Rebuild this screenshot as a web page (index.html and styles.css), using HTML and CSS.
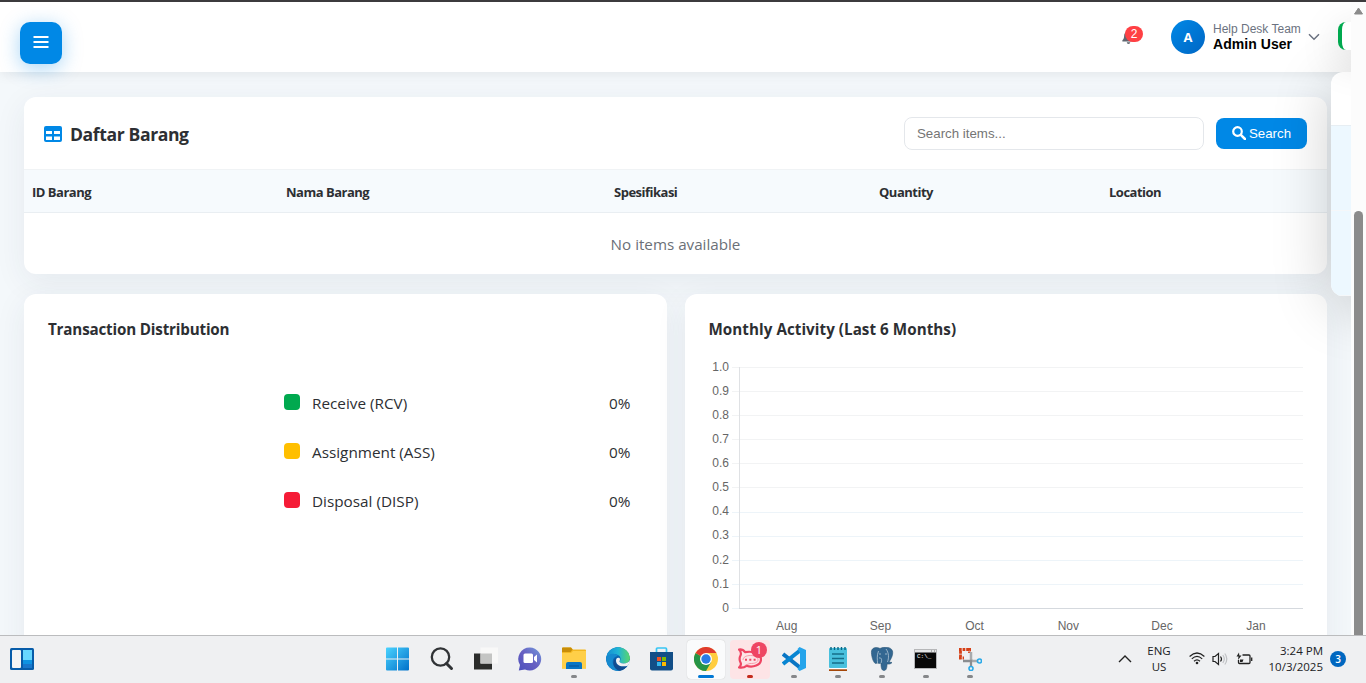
FILE: index.html
```html
<!DOCTYPE html>
<html lang="id">
<head>
<meta charset="utf-8">
<title>Daftar Barang</title>
<link rel="stylesheet" href="styles.css">
</head>
<body>
<div class="screen">
  <div class="window">
    <div class="page">
      <header class="topbar">
        <button class="menu-btn" aria-label="Menu">
          <svg width="16" height="14" viewBox="0 0 16 14"><path d="M0.5 2h15M0.5 7h15M0.5 12h15" stroke="#fff" stroke-width="2"/></svg>
        </button>
        <div class="account">
          <div class="bell">
            <svg width="13" height="14" viewBox="0 0 14 16" fill="#5f6670"><path d="M6 0h2v1.600c2.600.5 4 2.300 4 4.900 0 2.600.7 3.900 2 5.100V13H0v-1.400c1.300-1.200 2-2.500 2-5.100 0-2.600 1.400-4.400 4-4.900zM5 14h4a2 2 0 0 1-4 0z"/></svg>
            <span class="badge">2</span>
          </div>
          <div class="avatar">A</div>
          <div class="who"><span class="team">Help Desk Team</span><span class="name">Admin User</span></div>
          <svg class="chev" width="12" height="8" viewBox="0 0 12 8"><path d="M1 1.300l5 5 5-5" fill="none" stroke="#6b7280" stroke-width="1.500"/></svg>
        </div>
      </header>
      <main class="content">
        <section class="card items">
          <div class="items-head">
            <svg class="table-icon" width="18" height="16" viewBox="0 0 18 16"><rect width="18" height="16" rx="2" fill="#0088e6"/><path d="M2 5h6v3H2zM10 5h6v3h-6zM2 10.500h6V14H2zM10 10.500h6V14h-6z" fill="#fff"/></svg>
            <h2>Daftar Barang</h2>
            <input class="search" placeholder="Search items...">
            <button class="search-btn"><svg width="14" height="14" viewBox="0 0 14 14" fill="none" stroke="#fff"><circle cx="5.500" cy="5.500" r="4.300" stroke-width="2.200"/><path d="M8.800 8.800l4.200 4.200" stroke-width="2.500" stroke-linecap="round"/></svg>Search</button>
          </div>
          <div class="cols"><span>ID Barang</span><span>Nama Barang</span><span>Spesifikasi</span><span>Quantity</span><span>Location</span></div>
          <div class="empty">No items available</div>
        </section>
        <div class="charts">
          <section class="card panel">
            <h3>Transaction Distribution</h3>
            <div class="legend">
              <div class="entry"><i class="dot green"></i><span>Receive (RCV)</span><b>0%</b></div>
              <div class="entry"><i class="dot amber"></i><span>Assignment (ASS)</span><b>0%</b></div>
              <div class="entry"><i class="dot red"></i><span>Disposal (DISP)</span><b>0%</b></div>
            </div>
          </section>
          <section class="card panel">
            <h3 class="monthly">Monthly Activity (Last 6 Months)</h3>
            <svg class="chart" width="594" height="280" viewBox="709 359 594 280">
              <path class="grid" d="M732 367.500h571M732 391.500h571M732 415.500h571M732 439.500h571M732 463.500h571M732 487.500h571"/>
              <path class="grid cool" d="M732 512.500h571M732 536.500h571M732 560.500h571M732 584.500h571M732 608.500h7"/>
              <path d="M739.500 367v242" stroke="#dfe1e4"/><path d="M739 608.500h564" stroke="#d5d9de"/>
              <g text-anchor="end"><text x="729" y="371">1.0</text><text x="729" y="395">0.9</text><text x="729" y="419">0.8</text><text x="729" y="443">0.7</text><text x="729" y="467">0.6</text><text x="729" y="491">0.5</text><text x="729" y="515">0.4</text><text x="729" y="539">0.3</text><text x="729" y="564">0.2</text><text x="729" y="588">0.1</text><text x="729" y="612">0</text></g>
              <g text-anchor="middle"><text x="786.700" y="630">Aug</text><text x="880.500" y="630">Sep</text><text x="974.500" y="630">Oct</text><text x="1068.300" y="630">Nov</text><text x="1162" y="630">Dec</text><text x="1256" y="630">Jan</text></g>
            </svg>
          </section>
        </div>
      </main>
      <div class="toast"></div>
      <div class="notices"><div class="notice-head"></div><div class="notice"></div><div class="notice"></div></div>
    </div>
    <div class="scrollbar"><svg width="9" height="8" viewBox="0 0 9 8"><path d="M4.500 1L8.500 7h-8z" fill="#8b8b8b" stroke="#8b8b8b" stroke-linejoin="round"/></svg><div class="thumb"></div></div>
  </div>
  <footer class="taskbar">
    <div class="widgets"><svg width="24" height="22" viewBox="0 0 24 22"><rect width="24" height="22" rx="1.500" fill="#075ca9"/><rect x="2" y="2" width="9" height="18" rx="1" fill="#f4f4f4"/><path d="M13 2h9v10h-9z" fill="#68d7ff"/><path d="M13 12h9v4h-9z" fill="#0e93e2"/><path d="M13 16h9v4h-9z" fill="#1877cc"/></svg></div>
    <div class="apps">
      <div class="app"><svg viewBox="0 0 24 24"><defs><linearGradient id="win" x2="1" y2="1"><stop stop-color="#4ad3ff"/><stop offset="1" stop-color="#0070c9"/></linearGradient></defs><path d="M0 1.500Q0 .5 1 .5h10v11H0zM12 .5h10q1 0 1 1v10H12zM0 12.500h11v11H1q-1 0-1-1zM12 12.500h11v10q0 1-1 1H12z" fill="url(#win)"/></svg></div>
      <div class="app"><svg viewBox="0 0 24 24" fill="none" stroke="#303336"><circle cx="10.500" cy="10" r="8.700" stroke-width="2.300"/><path d="M16.500 16.500l5 5" stroke-width="3" stroke-linecap="round"/></svg></div>
      <div class="app"><svg viewBox="0 0 24 24"><path d="M0 6.500h18v16H0z" fill="#2b2c2b"/><path d="M6.500.5H24v16H6.500z" fill="#f8f8f8"/><path d="M6.500 6.500H18v10H6.500z" fill="#c4c5c4"/></svg></div>
      <div class="app"><svg viewBox="0 0 24 24"><defs><linearGradient id="chat" x1="1" x2="0" y2="1"><stop stop-color="#739bdc"/><stop offset=".5" stop-color="#675fc2"/><stop offset="1" stop-color="#4d50bc"/></linearGradient></defs><path d="M12 .5a11.500 11.500 0 1 1-5 22L.8 23.500 2 18A11.500 11.500 0 0 1 12 .5z" fill="url(#chat)"/><rect x="5.500" y="6.500" width="9.500" height="9.500" rx="1.500" fill="#fff"/><path d="M16 10l3-2.500v8L16 13z" fill="#fff"/></svg></div>
      <div class="app run"><svg viewBox="0 0 24 24"><path d="M0 1.500Q0 .5 1 .5h8l2 2h12q1 0 1 1v18H0z" fill="#f3b720"/><path d="M0 1q0-.5 1-.5h8l1.500 2L8.500 5H0z" fill="#c88d08"/><path d="M0 6h9l2-2h13v17.500H0z" fill="#ffcf48"/><path d="M4 22v-5q0-2 2-2h12q2 0 2 2v5z" fill="#0875c4"/><path d="M7 19h10" stroke="#075da5" stroke-width="1.500"/></svg></div>
      <div class="app"><svg viewBox="0 0 24 24"><defs><linearGradient id="edge" x2="1"><stop stop-color="#148bd1"/><stop offset=".5" stop-color="#20b4d6"/><stop offset="1" stop-color="#5bd66a"/></linearGradient><clipPath id="disc"><circle cx="12" cy="12" r="12"/></clipPath></defs><g clip-path="url(#disc)"><circle cx="12" cy="12" r="12" fill="#0b62ae"/><path d="M0 12C-.3 5 5.500 0 12 0c7 0 12 4.800 12 10.500 0 4-3 6-6 6-3.500 0-4.800-1.300-4.300-2.400C16 11 13.500 7.500 9 7.200 5 7 1 9 0 12z" fill="url(#edge)"/><path d="M0 12c1-5 9-7 12-3-4 .5-6 4-5 8 1 3.500 4 6.200 8 6.600C6 25.500 0 19 0 12z" fill="#1589cf"/><path d="M9.500 13c0 5 5.500 8 11.500 5.500A12 12 0 0 1 14 24C7 22 6 15 9.500 11z" fill="#104b91"/><path d="M10 13.500c0-2 1.500-3.500 3.500-2.500.8 1 .5 2.300 0 3.100-.5 1 .8 2.400 4.300 2.400 3 0 5-1.500 6.200-3.500v5c-2 .8-4 1.300-6.200 1.300-4 .4-7.800-1.800-7.800-5.800z" fill="#eff0f2"/></g></svg></div>
      <div class="app"><svg viewBox="0 0 24 24"><path d="M6.500 6V2q0-1 1-1h8q1 0 1 1v4" fill="none" stroke="#37c5f4" stroke-width="1.700"/><path d="M0 5h23v16.500q0 2-2 2H2q-2 0-2-2z" fill="#124e87"/><path d="M7 10h4v4H7z" fill="#f25022"/><path d="M12 10h4v4h-4z" fill="#7fba00"/><path d="M7 15h4v4H7z" fill="#32b5ec"/><path d="M12 15h4v4h-4z" fill="#ffb900"/></svg></div>
      <div class="app chrome"><svg viewBox="0 0 24 24"><circle cx="12" cy="12" r="12" fill="#ffcd40"/><path d="M12 12L1.600 6A12 12 0 0 0 12 24l5.200-9z" fill="#269447"/><path d="M12 12L1.600 6a12 12 0 0 1 20.800 0z" fill="#df3b2f"/><path d="M12 6h10.400l-5.200 9z" fill="#ffcd40"/><circle cx="12" cy="12" r="6" fill="#fff"/><circle cx="12" cy="12" r="4.700" fill="#297be6"/></svg></div>
      <div class="app rocket"><svg viewBox="0 0 24 24"><path d="M1 2.500c3-.5 4.500.5 6 2.700C15 3.500 23 7 23 12.500S15 21 8.500 18.800C6.500 20.500 4 21 1 20.500c2-1.800 2.300-3 1.700-4.500-1.400-2.500-1.400-5.500 0-8C3.300 6 2.500 4 1 2.500z" fill="#fde4e6" stroke="#ef4562" stroke-width="2.200" stroke-linejoin="round"/><path d="M5 13c0-3 3.500-4.500 7.500-4.500S20 10 20 12.700s-3.500 4-8 3.800L7.500 18" fill="none" stroke="#f58a9b" stroke-width=".8"/><path d="M7 11.700h2v2H7zM11.300 11.700h2v2h-2zM15.600 11.700h2v2h-2z" fill="#ef4562"/></svg><span class="app-badge">1</span></div>
      <div class="app run"><svg viewBox="0 0 24 24"><path d="M1 7l17 13.500" stroke="#0875c4" stroke-width="4"/><path d="M1 17L18 3.500" stroke="#0785d2" stroke-width="4"/><path d="M17.500 0L24 3v18l-6.500 3-2-2L18 18V6l-2.500-4z" fill="#25a4eb"/></svg></div>
      <div class="app run"><svg viewBox="0 0 24 24"><rect x="3" y="1" width="18" height="20" rx="1" fill="#48c0dd"/><path d="M5 0v3M8.500 0v3M12 0v3M15.500 0v3M19 0v3" stroke="#086584" stroke-width="1.400"/><path d="M6 7h12M6 11.500h12M6 16h12" stroke="#146d89" stroke-width="1.600"/><path d="M3 21h18v1.500H3z" fill="#fff"/><path d="M3 22.300h18V24H3z" fill="#a44709"/></svg></div>
      <div class="app run"><svg viewBox="0 0 24 24" stroke-linejoin="round"><path d="M1.500 4C2.500 0 7 0 10 1.500 14-.5 21-.5 22.500 4c1 4-2 9-3.500 11l3 .5c-1 1.500-3 1.800-5 1.500 0 3.500-.5 6.500-3 6.500s-3-3-3-7.500c-1 .7-2.500.5-3.500 0l-2 .5C3 15.500 1 8 1.500 4z" fill="#336791" stroke="#285475" stroke-width=".6"/><path d="M7.500 16c0-3-1-7 1-12M9 11c3-1 3 3 2 5M16 2c3 4 3 9 1.500 13M9 7h2M15 7h2" fill="none" stroke="#c5d5e1" stroke-width=".7"/></svg></div>
      <div class="app run"><svg viewBox="0 0 24 24"><path d="M.5 2.500h22v19H.5z" fill="#080808" stroke="#b6b7b9"/><path d="M1 3h21v2.500H1z" fill="#e4e5e6"/><path d="M17 4h1M20 4h1" stroke="#777"/><text class="prompt" x="3" y="11">C:\_</text></svg></div>
      <div class="app run"><svg viewBox="0 0 24 24" fill="none"><path d="M1 2.500h12M2.500 4v8M1 11h5M11.500 1v5" stroke="#d64017" stroke-width="2.800" stroke-dasharray="2.700 .9"/><path d="M13 5v7q0 2 2 2h5" stroke="#a8aaad" stroke-width="2.500"/><path d="M5 14h8v5.500" stroke="#8b8d90" stroke-width="2.300"/><circle cx="13" cy="21.500" r="2" stroke="#2aa9e8" stroke-width="1.600"/><circle cx="21.500" cy="14" r="2" stroke="#2aa9e8" stroke-width="1.600"/></svg></div>
    </div>
    <div class="tray">
      <svg width="14" height="8" viewBox="0 0 14 8"><path d="M1 7l6-6 6 6" fill="none" stroke="#222" stroke-width="1.400"/></svg>
      <div class="lang"><span>ENG</span><span>US</span></div>
      <svg class="wifi" width="16" height="13" viewBox="0 0 16 13" fill="none" stroke="#222" stroke-width="1.200"><path d="M.6 4.500q7.400-7 14.800 0M2.800 6.900q5.200-5 10.400 0M5 9.200q3-2.700 6 0"/><circle cx="8" cy="11" r="1.300" fill="#222" stroke="none"/></svg>
      <svg class="sound" width="16" height="14" viewBox="0 0 16 14" fill="none" stroke="#222" stroke-width="1.200"><path d="M1 4.500h2L6.500 1.500v11L3 9.500H1zM8.500 4.500q2 2.500 0 5"/><path d="M10.800 3q3 4 0 8M12.800 1.500q4 5.500 0 11" stroke="#c0c2c5"/></svg>
      <svg class="battery" width="17" height="14" viewBox="0 0 17 14"><path d="M6.500 3H13q1 0 1 1v6.500q0 1-1 1H3.500q-1 0-1-1V8M15.700 5.500v3.500" fill="none" stroke="#222" stroke-width="1.300"/><path d="M4 7.500h3.500L6.500 10H4zM3 .5l-2.500 4h2L2 8l3.500-4.500H3.300z" fill="#222"/></svg>
      <div class="clock"><span>3:24 PM</span><span>10/3/2025</span></div>
      <span class="count">3</span>
    </div>
  </footer>
</div>
</body>
</html>
```

FILE: styles.css
```css
* { box-sizing: border-box; }
body { margin: 0; overflow: hidden; font-family: "Open Sans", "Noto Sans", sans-serif; color: #2d2f33; }
svg { display: block; flex: none; }
h2, h3 { margin: 0; }
.screen { width: 1366px; height: 683px; display: flex; flex-direction: column; }
.window { height: 635px; border-top: 2px solid #3c3b3d; display: flex; }
.page { position: relative; flex: 1; overflow: hidden; background: #f4f8fb; }

.topbar { position: relative; z-index: 1; height: 70px; padding: 0 31px 0 20px; background: #fff; box-shadow: 0 2px 12px rgba(0, 0, 0, .08); display: flex; align-items: center; justify-content: space-between; }
.menu-btn { width: 42px; height: 42px; margin-top: 12px; padding: 0 0 2px; border: 0; border-radius: 10px; background: #0088e6; box-shadow: 0 4px 20px rgba(0, 136, 230, .35); display: flex; align-items: center; justify-content: center; }
.account { display: flex; align-items: center; font-family: "Liberation Sans", sans-serif; }
.bell { position: relative; width: 14px; margin-right: 35px; }
.badge { position: absolute; left: 3px; top: -4px; width: 18px; height: 16px; border-radius: 8px; background: #ff4044; color: #fff; font-size: 12px; line-height: 16px; text-align: center; }
.avatar { width: 34px; height: 34px; border-radius: 50%; background: linear-gradient(135deg, #0088e6, #0066c4); color: #fff; font: 700 13px/34px "Open Sans", sans-serif; text-align: center; }
.who { width: 89px; margin: 0 7px 0 8px; display: flex; flex-direction: column; white-space: nowrap; }
.team { color: #6b7280; font-size: 12px; line-height: 15px; }
.name { color: #000; font-weight: 700; font-size: 14px; line-height: 15px; letter-spacing: .05px; }
.chev { margin-left: -1px; }

.content { padding: 25px 24px 0; display: flex; flex-direction: column; gap: 20px; }
.card { background: #fff; border-radius: 12px; box-shadow: 0 8px 32px rgba(40, 50, 80, .075); }
.items { height: 177px; overflow: hidden; }
.items-head { height: 72px; padding: 0 20px; display: flex; align-items: center; }
.table-icon { margin-top: 2px; }
.items-head h2 { flex: 1; margin-left: 8px; padding-top: 2px; font-size: 17.600px; font-weight: 700; letter-spacing: -.4px; }
.search { width: 300px; height: 33px; margin-right: 12px; padding: 0 12px; border: 1px solid #e4e7eb; border-radius: 8px; font: 13.300px "Liberation Sans", sans-serif; }
.search::placeholder { color: #757575; }
.search-btn { width: 91px; height: 31px; padding: 0; border: 0; border-radius: 8px; background: #0088e6; color: #fff; font: 13.300px "Liberation Sans", sans-serif; display: flex; align-items: center; justify-content: center; gap: 3px; }
.cols { height: 44px; padding: 2px 8px 0; background: #f6fafd; border-top: 1px solid #f0f3f5; border-bottom: 1px solid #e9eef2; display: grid; grid-template-columns: 254px 328px 265px 230px 1fr; align-items: center; font-size: 13px; font-weight: 700; letter-spacing: -.5px; }
.empty { padding-top: 1px; color: #6b7077; font-size: 15.200px; line-height: 61px; text-align: center; }
.charts { display: flex; gap: 18px; }
.panel { flex: 1; height: 420px; padding: 24px; }
.panel h3 { font-size: 15.200px; line-height: 23px; font-weight: 700; letter-spacing: -.18px; }
.panel .monthly { letter-spacing: .05px; }
.legend { margin: 38px 13px 0 236px; display: flex; flex-direction: column; }
.entry { height: 49px; display: flex; align-items: center; font-size: 15.300px; }
.entry span { flex: 1; margin: -2px 0 0 12px; }
.entry b { margin: -2px -1px 0 0; font-weight: 500; }
.dot { width: 16px; height: 16px; margin-top: -3px; border-radius: 4px; }
.green { background: #00a94f; }
.amber { background: #ffbf00; }
.red { background: #f51b36; }
.chart { margin-top: 18px; }
.chart text { fill: #666; font: 12px "Liberation Sans", sans-serif; }
.grid { stroke: #f2f3f4; fill: none; }
.grid.cool { stroke: #edf4f9; }

.toast { position: absolute; z-index: 3; left: 1338px; top: 20px; width: 200px; height: 28px; background: #fff; border-left: 4px solid #00a94f; border-radius: 8px; box-shadow: 0 10px 40px rgba(0, 0, 0, .15); }
.notices { position: absolute; z-index: 2; left: 1331px; top: 70px; width: 340px; height: 224px; background: #fff; border-radius: 12px; overflow: hidden; box-shadow: 0 10px 60px rgba(0, 0, 0, .2); }
.notice-head { height: 54px; border-bottom: 1px solid #e7eef3; }
.notice { height: 85px; background: #edf8ff; border-bottom: 1px solid #f5f7f9; }
.scrollbar { width: 15px; background: #fcfcfc; display: flex; flex-direction: column; align-items: center; padding-top: 5px; }
.thumb { width: 9px; flex: 1; margin-top: 196px; background: #8b8b8b; border-radius: 5px 5px 0 0; }

.taskbar { height: 48px; background: #eff0f2; border-top: 1px solid #bbbcbe; display: flex; align-items: center; }
.widgets { width: 376px; padding: 0 0 2px 10px; }
.apps { display: flex; }
.app { position: relative; width: 44px; height: 47px; padding-bottom: 1px; display: flex; align-items: center; justify-content: center; }
.app > svg { width: 24px; height: 24px; }
.run::after, .chrome::after, .rocket::after { content: ""; position: absolute; bottom: 5px; width: 6px; height: 3px; border-radius: 2px; background: #85878a; }
.chrome, .rocket { width: 40px; height: 39px; margin: 4px 2px; border-radius: 4px; }
.chrome { width: 38px; margin: 4px 3px; background: #fafbfc; box-shadow: 0 0 1px #bbb; }
.rocket { background: #fde4e6; }
.chrome::after { width: 16px; bottom: 1px; background: #0078d4; }
.rocket::after { bottom: 1px; background: #c42b1c; }
.app-badge { position: absolute; left: 21px; top: 2px; width: 16px; height: 16px; border-radius: 50%; background: #ef4562; color: #fff; font-size: 11px; line-height: 16px; text-align: center; }
.prompt { fill: #fff; font: 6px "Liberation Mono", monospace; }
.tray { margin: 0 0 2px 126px; display: flex; align-items: center; color: #202124; font-size: 11.500px; line-height: 16px; }
.lang { width: 54px; display: flex; flex-direction: column; align-items: center; }
.wifi { margin-left: 3px; }
.sound { margin-left: 7px; }
.battery { margin-left: 8px; }
.clock { width: 70px; display: flex; flex-direction: column; align-items: flex-end; }
.count { width: 16px; height: 16px; margin-left: 7px; border-radius: 50%; background: #0067c0; color: #fff; font-size: 10px; font-weight: 600; text-align: center; }
```
